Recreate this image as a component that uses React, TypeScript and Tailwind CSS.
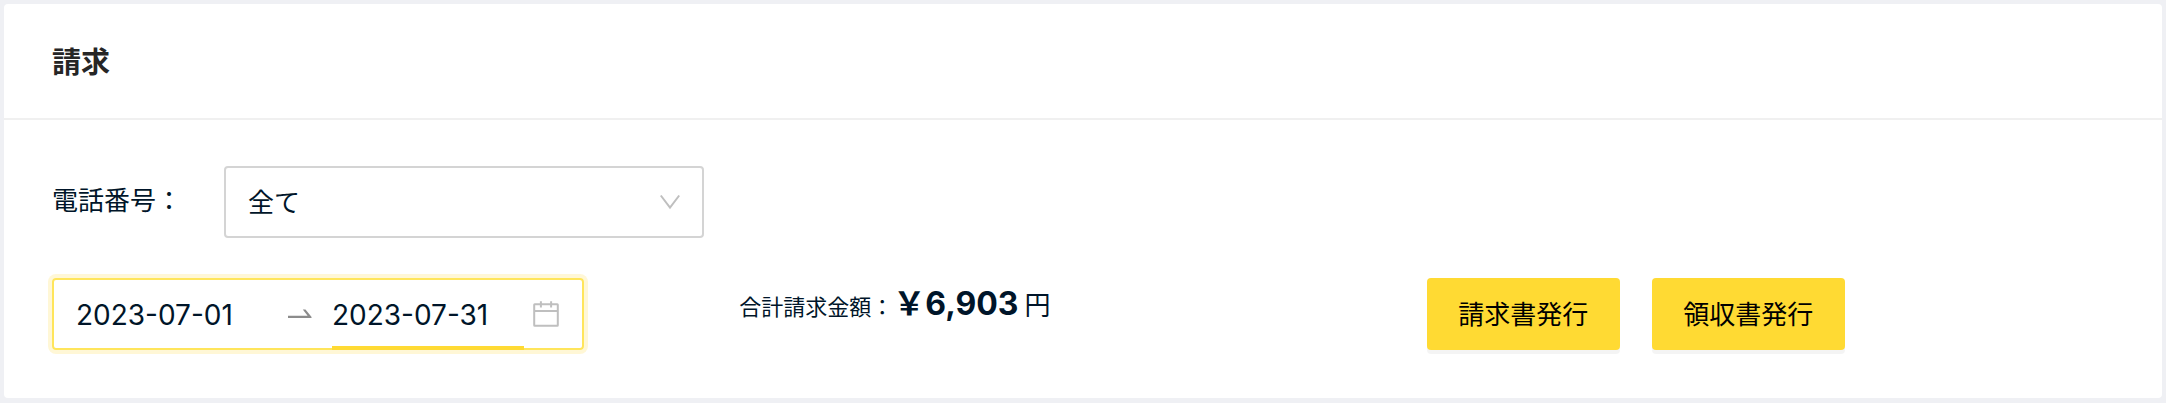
import { useState } from "react";

const BillingPage = () => {
    const [phone, setPhone] = useState("all");
    const [range, setRange] = useState({
        startDate: "2023-07-01",
        endDate: "2023-07-31"
    });

    const handleChange = (e: any) => {
        setRange({ ...range, [e.target.name]: e.target.value });
    };

    return (
        <div className="min-h-screen bg-[#eff0f4] p-1 pb-[5px] font-['Inter','Noto_Sans_CJK_JP',sans-serif] text-[#001529]">
            <section className="rounded bg-white">
                <header className="flex h-[116px] items-center border-b-2 border-[#f0f0f0] px-12 pt-1">
                    <h1 className="text-[29px] leading-10 font-bold text-[#262626]">請求</h1>
                </header>

                <div className="px-12 pt-[46px] pb-12">
                    <div className="flex items-center">
                        <label htmlFor="phone" className="w-[172px] pb-0.5 text-[26px] leading-10">
                            電話番号：
                        </label>
                        <div className="relative w-[480px]">
                            <select
                                id="phone"
                                value={phone}
                                onChange={(e) => setPhone(e.target.value)}
                                className="h-[72px] w-full appearance-none rounded border-2 border-[#d4d4d4] bg-white px-[22px] text-[26px] outline-none"
                            >
                                <option value="all">全て</option>
                            </select>
                            <svg
                                viewBox="0 0 24 24"
                                className="pointer-events-none absolute top-6 right-[22px] size-6"
                                fill="none"
                                stroke="#bfbfbf"
                                strokeWidth="2"
                            >
                                <path d="M2.8 5.5 12 17.6 21.2 5.5" />
                            </svg>
                        </div>
                    </div>

                    <div className="mt-10 grid grid-cols-3 items-start">
                        <div className="flex h-[72px] w-[532px] items-center rounded border-2 border-[#ffe55b] px-[22px] ring-4 ring-[#fff7d6]">
                            <input
                                name="startDate"
                                aria-label="開始日"
                                value={range.startDate}
                                onChange={handleChange}
                                className="w-48 pt-0.5 text-[28px] leading-10 outline-none"
                            />
                            <div className="flex w-16 justify-center">
                                <svg viewBox="0 0 24 12" className="h-3 w-6" fill="#8c8c8c">
                                    <path d="M0 7.8h19.6L14.8 1.4h2.7l5.9 7.4c.5.6.1 1.3-.7 1.3H0z" />
                                </svg>
                            </div>
                            <div className="relative flex w-48 items-center self-stretch">
                                <input
                                    name="endDate"
                                    aria-label="終了日"
                                    value={range.endDate}
                                    onChange={handleChange}
                                    className="w-full pt-0.5 text-[28px] leading-10 outline-none"
                                />
                                <span className="absolute inset-x-0 -bottom-0.5 h-1 bg-[#ffda33]" />
                            </div>
                            <svg
                                viewBox="0 0 28 28"
                                className="ml-2 size-7"
                                fill="none"
                                stroke="#bfbfbf"
                                strokeWidth="2"
                            >
                                <rect x="2.2" y="4.2" width="23.6" height="21.6" rx="0.5" />
                                <path d="M2.2 11h23.6M8.9 1.2v6.4M19.1 1.2v6.4" />
                            </svg>
                        </div>

                        <p className="text-[22px] leading-[52px]">
                            合計請求金額：
                            <strong className="text-[32px] font-bold">￥6,903</strong>
                            <span className="ml-1.5 text-[26px]">円</span>
                        </p>

                        <div className="flex gap-8">
                            <button className="h-[72px] w-[193px] rounded bg-[#ffda33] text-[26px] text-black shadow-[0_4px_0_rgba(0,0,0,0.045)]">
                                請求書発行
                            </button>
                            <button className="h-[72px] w-[193px] rounded bg-[#ffda33] text-[26px] text-black shadow-[0_4px_0_rgba(0,0,0,0.045)]">
                                領収書発行
                            </button>
                        </div>
                    </div>
                </div>
            </section>
        </div>
    );
};

export default BillingPage;
